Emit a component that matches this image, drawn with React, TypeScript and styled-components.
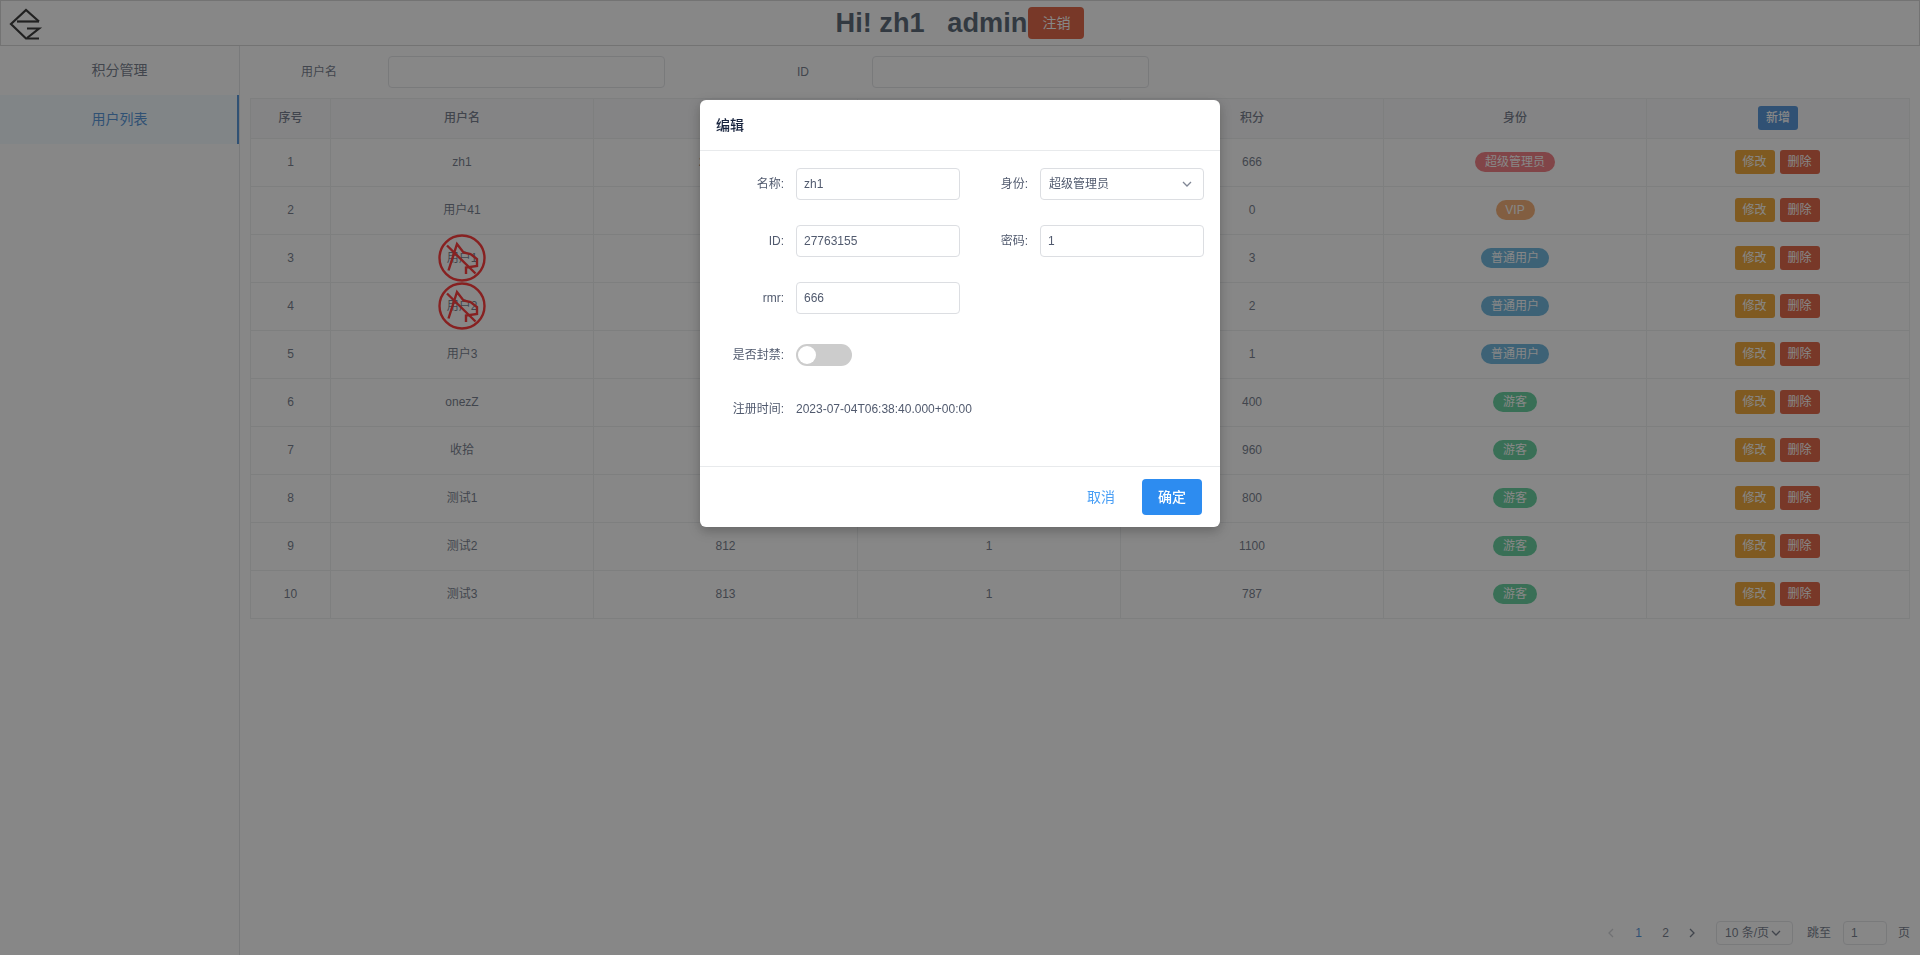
import React from 'react'
import styled, { createGlobalStyle } from 'styled-components'

const GlobalStyle = createGlobalStyle`
  html, body {
    margin: 0;
    padding: 0;
    height: 100%;
    overflow: hidden;
    background: #fff;
    color: #515a6e;
    font-family: "Liberation Sans", "Noto Sans CJK SC", sans-serif;
    font-size: 12px;
    line-height: 1.5;
  }
  * { box-sizing: border-box; }
`

const Page = styled.div`
  width: 100%;
  height: 100vh;
  display: flex;
  flex-direction: column;
`

const Header = styled.header`
  height: 46px;
  flex: none;
  border: 1px solid #ccc;
  display: grid;
  grid-template-columns: 1fr auto 1fr;
  align-items: center;
`

const Logo = styled.svg`
  width: 44px;
  height: 44px;
  display: block;
`

const Title = styled.div`
  display: flex;
  align-items: center;
`

const Greeting = styled.h1`
  margin: 0;
  font-size: 27.2px;
  line-height: 32px;
  font-weight: 700;
  color: #2c3e50;
  white-space: pre;
`

const LogoutButton = styled.button`
  width: 56px;
  height: 32px;
  margin-left: 1px;
  padding: 0;
  border: none;
  border-radius: 4px;
  background: #d93a12;
  color: #fff;
  font: inherit;
  font-size: 14px;
`

const Body = styled.div`
  flex: 1;
  display: flex;
  min-height: 0;
`

const Sidebar = styled.nav`
  width: 240px;
  flex: none;
  border-right: 1px solid #dcdee2;
`

const NavItem = styled.div<{ $active?: boolean }>`
  height: 49px;
  display: flex;
  align-items: center;
  justify-content: center;
  font-size: 14px;
  color: ${p => (p.$active ? '#2678d0' : '#515a6e')};
  background: ${p => (p.$active ? '#f0faff' : 'transparent')};
  border-right: ${p => (p.$active ? '2px solid #2678d0' : 'none')};
  padding-left: ${p => (p.$active ? 2 : 0)}px;
`

const Main = styled.main`
  flex: 1;
  min-width: 0;
  display: flex;
  flex-direction: column;
  padding: 10px;
`

const Filters = styled.div`
  display: flex;
  gap: 69px;
  margin-bottom: 10px;
`

const FilterField = styled.div`
  display: flex;
  align-items: center;
`

const FilterLabel = styled.label`
  width: 138px;
  text-align: center;
`

const Input = styled.div<{ $width: number; $small?: boolean }>`
  width: ${p => p.$width}px;
  height: ${p => (p.$small ? 24 : 32)}px;
  border: 1px solid #dcdee2;
  border-radius: 4px;
  background: #fff;
  padding: 0 7px;
  display: flex;
  align-items: center;
  justify-content: space-between;
  color: #515a6e;
  font-size: 12px;
`

const SelectBox = styled(Input)`
  padding: 0 10px 0 8px;
`

const Table = styled.table`
  width: 1659px;
  table-layout: fixed;
  border-collapse: collapse;
  border: 1px solid #dcdee2;
`

const Th = styled.th`
  height: 40px;
  padding: 0 0 2px;
  background: #f8f8f9;
  border: 1px solid #e8eaec;
  font-size: 12px;
  font-weight: 500;
  text-align: center;
  color: #515a6e;
`

const Td = styled.td`
  height: 48px;
  padding: 0 0 2px;
  border: 1px solid #e8eaec;
  font-size: 12px;
  text-align: center;
  color: #515a6e;
`

const UserName = styled.span`
  position: relative;
  display: inline-block;
`

const BanMark = styled.svg`
  position: absolute;
  left: 50%;
  top: 50%;
  width: 48px;
  height: 48px;
  margin: -24px 0 0 -24px;
  color: #f00;
`

const Tag = styled.span<{ $color: string; $width: number }>`
  display: inline-block;
  width: ${p => p.$width}px;
  height: 20px;
  line-height: 20px;
  border-radius: 10px;
  background: ${p => p.$color};
  color: #fff;
  font-size: 12px;
  vertical-align: middle;
`

const Actions = styled.div`
  display: flex;
  justify-content: center;
  gap: 5px;
  padding-right: 2px;
`

const SmallButton = styled.button<{ $color: string }>`
  width: 40px;
  height: 24px;
  padding: 0;
  border: none;
  border-radius: 3px;
  background: ${p => p.$color};
  color: #fff;
  font: inherit;
  font-size: 12px;
  vertical-align: middle;
`

const Pager = styled.div`
  margin-top: auto;
  height: 24px;
  display: flex;
  justify-content: flex-end;
  align-items: center;
`

const PagerItem = styled.span<{ $active?: boolean }>`
  width: 27px;
  height: 24px;
  display: flex;
  align-items: center;
  justify-content: center;
  color: ${p => (p.$active ? '#2678d0' : '#515a6e')};
`

const PagerSize = styled(SelectBox)`
  margin-left: 10px;
`

const PagerText = styled.span<{ $left: number; $right?: number }>`
  margin: 0 ${p => p.$right ?? 0}px 0 ${p => p.$left}px;
`

const Mask = styled.div`
  position: fixed;
  inset: 0;
  background: rgba(55, 55, 55, 0.6);
`

const Modal = styled.div`
  position: fixed;
  top: 100px;
  left: 700px;
  width: 520px;
  height: 427px;
  display: flex;
  flex-direction: column;
  background: #fff;
  border-radius: 6px;
  box-shadow: 0 4px 12px rgba(0, 0, 0, 0.25);
`

const ModalHead = styled.div`
  height: 51px;
  flex: none;
  padding: 0 16px;
  display: flex;
  align-items: center;
  border-bottom: 1px solid #e8eaec;
  font-size: 14px;
  font-weight: 500;
  color: #17233d;
`

const ModalBody = styled.div`
  flex: 1;
  padding: 17px 16px 0;
  display: grid;
  grid-template-columns: 244px 244px;
  grid-auto-rows: 32px;
  row-gap: 25px;
`

const Field = styled.div<{ $wide?: boolean }>`
  display: flex;
  align-items: center;
  gap: 12px;
  grid-column: ${p => (p.$wide ? '1 / 3' : 'auto')};
`

const TimeField = styled(Field)`
  align-items: flex-start;
  padding-top: 4px;
`

const FieldLabel = styled.label`
  width: 68px;
  flex: none;
  text-align: right;
  color: #515a6e;
`

const Switch = styled.div`
  width: 56px;
  height: 22px;
  padding: 2px;
  border-radius: 11px;
  background: #ccc;
`

const Knob = styled.div`
  width: 18px;
  height: 18px;
  border-radius: 50%;
  background: #fff;
`

const ModalFoot = styled.div`
  height: 61px;
  flex: none;
  padding: 12px 18px 0 0;
  border-top: 1px solid #e8eaec;
  display: flex;
  justify-content: flex-end;
  gap: 11px;
`

const FootButton = styled.button<{ $primary?: boolean }>`
  width: 60px;
  height: 36px;
  padding: 0;
  border: none;
  border-radius: 4px;
  font: inherit;
  font-size: 14px;
  font-weight: ${p => (p.$primary ? 500 : 400)};
  background: ${p => (p.$primary ? '#2d8cf0' : 'transparent')};
  color: ${p => (p.$primary ? '#fff' : '#4a9ff5')};
`

const Chevron: React.FC<{ dir: 'left' | 'right' | 'down'; color?: string }> = ({ dir, color = 'currentColor' }) => {
  const d = { left: 'M8 2 4 6l4 4', right: 'M4 2l4 4-4 4', down: 'M2 4l4 4 4-4' }[dir]
  return (
    <svg width="12" height="12" viewBox="0 0 12 12" fill="none" stroke={color} strokeWidth="1.3">
      <path d={d} />
    </svg>
  )
}

interface IUser {
  id: string
  name: string
  uid: string
  pwd: string
  score: number
  role: string
  banned?: boolean
}

const users: IUser[] = [
  { id: '1', name: 'zh1', uid: '27763155', pwd: '1', score: 666, role: '超级管理员' },
  { id: '2', name: '用户41', uid: '41', pwd: '1', score: 0, role: 'VIP' },
  { id: '3', name: '用户1', uid: '31', pwd: '1', score: 3, role: '普通用户', banned: true },
  { id: '4', name: '用户2', uid: '32', pwd: '1', score: 2, role: '普通用户', banned: true },
  { id: '5', name: '用户3', uid: '33', pwd: '1', score: 1, role: '普通用户' },
  { id: '6', name: 'onezZ', uid: '806', pwd: '1', score: 400, role: '游客' },
  { id: '7', name: '收拾', uid: '807', pwd: '1', score: 960, role: '游客' },
  { id: '8', name: '测试1', uid: '811', pwd: '1', score: 800, role: '游客' },
  { id: '9', name: '测试2', uid: '812', pwd: '1', score: 1100, role: '游客' },
  { id: '10', name: '测试3', uid: '813', pwd: '1', score: 787, role: '游客' },
]

const roleTag: Record<string, { color: string; width: number }> = {
  '超级管理员': { color: '#f05a62', width: 80 },
  VIP: { color: '#f29a50', width: 39 },
  '普通用户': { color: '#48a3d4', width: 68 },
  '游客': { color: '#3cc484', width: 44 },
}

const App: React.FC = () => {
  return (
    <Page>
      <GlobalStyle />
      <Header>
        <Logo viewBox="1 1 44 44" fill="none" stroke="#000" strokeWidth="2.2">
          <path d="M39 21.500 26 10 11 24 26 38.500H39" />
          <path d="M17 21.500H39" />
          <path d="M27 28.500H39L27 38" />
        </Logo>
        <Title>
          <Greeting>{'Hi! zh1   admin'}</Greeting>
          <LogoutButton>注销</LogoutButton>
        </Title>
      </Header>
      <Body>
        <Sidebar>
          <NavItem>积分管理</NavItem>
          <NavItem $active>用户列表</NavItem>
        </Sidebar>
        <Main>
          <Filters>
            <FilterField>
              <FilterLabel>用户名</FilterLabel>
              <Input $width={277} />
            </FilterField>
            <FilterField>
              <FilterLabel>ID</FilterLabel>
              <Input $width={277} />
            </FilterField>
          </Filters>
          <Table>
            <colgroup>
              <col width="80" />
              <col width="263" />
              <col width="264" />
              <col width="263" />
              <col width="263" />
              <col width="263" />
              <col width="263" />
            </colgroup>
            <thead>
              <tr>
                <Th>序号</Th>
                <Th>用户名</Th>
                <Th>ID</Th>
                <Th>密码</Th>
                <Th>积分</Th>
                <Th>身份</Th>
                <Th><SmallButton $color="#2678d0">新增</SmallButton></Th>
              </tr>
            </thead>
            <tbody>
              {users.map(user => (
                <tr key={user.id}>
                  <Td>{user.id}</Td>
                  <Td>
                    <UserName>
                      {user.name}
                      {user.banned && (
                        <BanMark viewBox="0 0 48 48" fill="none" stroke="currentColor" strokeWidth="2.4">
                          <circle cx="24" cy="24" r="22.500" />
                          <path d="M10.500 36.500 19 10l6.500 8.500 7 1.500 6.500 5v7l-11 1.500V40" />
                          <path d="M9 11.500 37.500 39.500" />
                        </BanMark>
                      )}
                    </UserName>
                  </Td>
                  <Td>{user.uid}</Td>
                  <Td>{user.pwd}</Td>
                  <Td>{user.score}</Td>
                  <Td>
                    <Tag $color={roleTag[user.role].color} $width={roleTag[user.role].width}>{user.role}</Tag>
                  </Td>
                  <Td>
                    <Actions>
                      <SmallButton $color="#eb8e00">修改</SmallButton>
                      <SmallButton $color="#d93a12">删除</SmallButton>
                    </Actions>
                  </Td>
                </tr>
              ))}
            </tbody>
          </Table>
          <Pager>
            <PagerItem><Chevron dir="left" color="#c5c8ce" /></PagerItem>
            <PagerItem $active>1</PagerItem>
            <PagerItem>2</PagerItem>
            <PagerItem><Chevron dir="right" /></PagerItem>
            <PagerSize $width={77} $small>
              10 条/页
              <Chevron dir="down" />
            </PagerSize>
            <PagerText $left={14} $right={12}>跳至</PagerText>
            <Input $width={44} $small>1</Input>
            <PagerText $left={11}>页</PagerText>
          </Pager>
        </Main>
      </Body>
      <Mask />
      <Modal>
        <ModalHead>编辑</ModalHead>
        <ModalBody>
          <Field>
            <FieldLabel>名称:</FieldLabel>
            <Input $width={164}>zh1</Input>
          </Field>
          <Field>
            <FieldLabel>身份:</FieldLabel>
            <SelectBox $width={164}>
              超级管理员
              <Chevron dir="down" color="#808695" />
            </SelectBox>
          </Field>
          <Field>
            <FieldLabel>ID:</FieldLabel>
            <Input $width={164}>27763155</Input>
          </Field>
          <Field>
            <FieldLabel>密码:</FieldLabel>
            <Input $width={164}>1</Input>
          </Field>
          <Field>
            <FieldLabel>rmr:</FieldLabel>
            <Input $width={164}>666</Input>
          </Field>
          <Field />
          <Field $wide>
            <FieldLabel>是否封禁:</FieldLabel>
            <Switch><Knob /></Switch>
          </Field>
          <TimeField $wide>
            <FieldLabel>注册时间:</FieldLabel>
            2023-07-04T06:38:40.000+00:00
          </TimeField>
        </ModalBody>
        <ModalFoot>
          <FootButton>取消</FootButton>
          <FootButton $primary>确定</FootButton>
        </ModalFoot>
      </Modal>
    </Page>
  )
}

export default App
